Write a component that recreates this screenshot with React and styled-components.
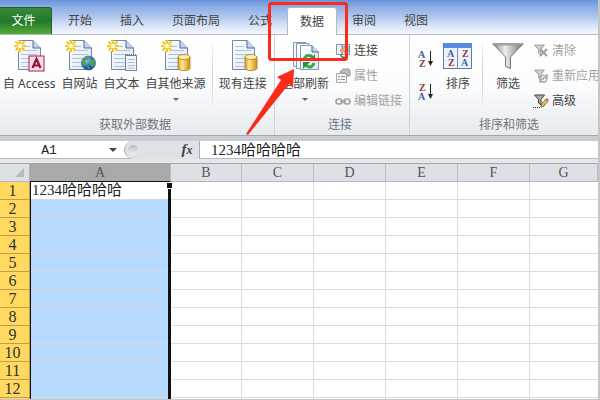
import React from "react";
import styled, { createGlobalStyle, css } from "styled-components";

const Global = createGlobalStyle`
  * { box-sizing: border-box; }
  body { margin: 0; font: 12px/16px "Noto Sans", "Noto Sans CJK SC", sans-serif; color: #444; }
  button, input { font: inherit; color: inherit; margin: 0; padding: 0; border: 0; background: none; }
`;

const Window = styled.div`
  position: relative;
  display: flex;
  flex-direction: column;
  height: 100vh;
  overflow: hidden;
  background: #fff;
  border-right: 2px solid #c6c6c6;
  border-bottom: 1px solid #c6c6c6;
`;

const TabBar = styled.nav`
  display: flex;
  align-items: flex-end;
  flex: none;
  height: 35px;
  border-bottom: 1px solid #b2bac8;
  background: linear-gradient(#6a93dc, #8bade6 7px, #b1c7ee 17px, #dbe5f7 26px, #f3f6fc 34px);
`;

const Tab = styled.button`
  height: 27px;
  margin: 0 1px;
  padding: 0 13px;
  white-space: nowrap;
  ${(p) => p.$active && css`
    height: 28px;
    margin-bottom: -1px;
    background: #fff;
    border: 1px solid #b2bac8;
    border-bottom: 0;
    border-radius: 3px 3px 0 0;
    padding: 0 12px;
  `}
`;

const FileTab = styled.button`
  width: 52px;
  height: 27px;
  margin-right: 2px;
  padding-right: 4px;
  color: #fff;
  border-top: 1px solid #17632a;
  border-right: 1px solid #17632a;
  border-radius: 0 3px 0 0;
  background: linear-gradient(#3a8a38, #22782a 50%, #55aa36);
`;

const Ribbon = styled.div`
  display: flex;
  flex: none;
  height: 101px;
  overflow: hidden;
  border-bottom: 1px solid #a2a6ac;
  background: linear-gradient(#fff, #fbfcfd 50%, #e7eaee);
`;

const Group = styled.section`
  display: flex;
  flex-direction: column;
  flex: ${(p) => (p.$width ? "none" : "1 0 0")};
  width: ${(p) => (p.$width ? p.$width + "px" : "auto")};
  min-width: 0;
  border-right: ${(p) => (p.$width ? "1px solid #cfd2d7" : "0")};
`;

const GroupBody = styled.div`
  display: flex;
  flex: 1;
  gap: ${(p) => p.$gap}px;
  padding: 4px 0 0 ${(p) => p.$left}px;
`;

const GroupLabel = styled.div`
  padding: 0 4px 2px 0;
  text-align: center;
  color: #6e7480;
  ${Group}:last-child > & { padding-left: 14px; }
`;

const LargeButton = styled.button`
  display: flex;
  flex: none;
  flex-direction: column;
  align-items: center;
  align-self: flex-start;
  min-width: ${(p) => p.$min || 0}px;
  white-space: nowrap;
  & > svg { flex: none; }
  & > span { margin-top: 3px; }
`;

const Caret = styled.i`
  margin-top: 6px;
  border: 3px solid transparent;
  border-top-color: #666;
  border-bottom: 0;
`;

const Divider = styled.div`
  flex: none;
  width: 1px;
  height: 62px;
  margin-top: 4px;
  background: linear-gradient(#f2f3f5, #cdd1d6 50%, #e8eaed);
`;

const SmallStack = styled.div`
  display: flex;
  flex: none;
  flex-direction: column;
  gap: 9px;
  padding-top: 4px;
`;

const SmallButton = styled.button`
  display: flex;
  align-items: center;
  gap: 3px;
  height: 16px;
  white-space: nowrap;
  color: ${(p) => (p.disabled ? "#a2a2a2" : "#444")};
`;

const SortStack = styled(SmallStack)`
  gap: 11px;
  padding-top: 9px;
`;

const SortButton = styled.button`
  display: block;
  width: 16px;
  height: 22px;
  & > svg { display: block; }
`;

const FormulaBar = styled.div`
  display: flex;
  flex: none;
  height: 27px;
  border-top: 5px solid #c9cdd3;
  border-bottom: 4px solid #e4e7ec;
  box-shadow: inset 0 -1px #b8bcc2;
  background: #fff;
  color: #222;
`;

const NameBox = styled.input`
  width: 98px;
  text-align: center;
  font: 13px/17px "Liberation Mono", monospace;
`;

const NameMenu = styled.button`
  display: flex;
  justify-content: center;
  align-items: center;
  width: 26px;
  padding-left: 4px;
  & > i { margin: 0; border-width: 4px 4px 0; border-top-color: #444; }
`;

const FormulaTools = styled.div`
  display: flex;
  align-items: center;
  justify-content: space-between;
  width: 76px;
  padding-right: 2px;
  border-left: 1px solid #a9adb3;
  border-right: 1px solid #a9adb3;
  border-radius: 9px 0 0 9px;
  background: #dfe2e7;
`;

const Knob = styled.span`
  width: 10px;
  height: 10px;
  margin-left: 3px;
  border-radius: 50%;
  background: linear-gradient(#b5b9be, #f4f5f6);
`;

const FxButton = styled.button`
  width: 20px;
  color: #444;
  font: italic bold 15px/17px "Liberation Serif", serif;
  & > small { font-size: 12px; }
`;

const FormulaInput = styled.input`
  flex: 1;
  min-width: 0;
  padding-left: 11px;
  font: 15px/17px "Liberation Serif", "Noto Sans CJK SC", serif;
`;

const SheetArea = styled.main`
  flex: 1;
  min-height: 0;
  overflow: hidden;
  border-top: 1px solid #a5a9af;
`;

const Sheet = styled.table`
  width: 100%;
  table-layout: fixed;
  border-collapse: separate;
  border-spacing: 0;
  color: #333;
  font: 15px/17px "Liberation Serif", "Noto Sans CJK SC", serif;
`;

const Col = styled.col`
  width: ${(p) => (p.$width ? p.$width + "px" : "auto")};
`;

const ColumnHead = styled.th`
  height: 18px;
  padding: 0;
  border-right: 1px solid #b9bdc3;
  border-bottom: 1px solid ${(p) => (p.$selected ? "#111" : "#b5b8bd")};
  background: ${(p) => (p.$selected ? "#a9a9a9" : "#dde1e6")};
  font: 14px/17px "Liberation Serif", serif;
  color: #555;
`;

const Corner = styled.td`
  padding: 0 5px 0 0;
  border-right: 1px solid #b0b4ba;
  border-bottom: 1px solid #b5b8bd;
  background: #dde1e6;
  & > svg { display: block; margin-left: auto; }
`;

const RowHead = styled.th`
  height: 18px;
  padding: 0 4px 0 0;
  overflow: hidden;
  border-right: 1px solid #c89b48;
  border-bottom: 1px solid #c89b48;
  background: #ffd960;
  font: 16px/17px "Liberation Serif", serif;
`;

const Cell = styled.td`
  height: 18px;
  padding: 0;
  border-right: 1px solid #dcdcdc;
  border-bottom: 1px solid #dcdcdc;
  &:last-child { border-right: 0; }
`;

const SelectedCell = styled.td`
  position: relative;
  height: 18px;
  padding: 0 3px 1px 2px;
  white-space: nowrap;
  color: #222;
  background:
    linear-gradient(#111, #111) left / 1px 100% no-repeat,
    linear-gradient(#111, #111) right / 3px 100% no-repeat,
    linear-gradient(#d5d9df, #d5d9df) bottom / 100% 1px no-repeat,
    ${(p) => (p.$active ? "#fff" : "#b5d9ff")};
`;

const FillHandle = styled.span`
  position: absolute;
  top: 0;
  right: -1px;
  width: 6px;
  height: 7px;
  background: #111;
  border: solid #fff;
  border-width: 1px 0 1px 1px;
`;

const Annotation = styled.svg`
  position: absolute;
  top: 0;
  left: 0;
  pointer-events: none;
`;

const Defs = () => (
  <defs>
    <linearGradient id="page" x2="1" y2="1"><stop stopColor="#fff" /><stop offset="1" stopColor="#d9e6f6" /></linearGradient>
    <linearGradient id="gold"><stop stopColor="#d99a1c" /><stop offset=".35" stopColor="#ffeb9a" /><stop offset="1" stopColor="#cf8c0c" /></linearGradient>
    <radialGradient id="sea" cx=".35" cy=".3"><stop stopColor="#9fd0ff" /><stop offset="1" stopColor="#1d55ad" /></radialGradient>
    <linearGradient id="steel"><stop stopColor="#8c8c8c" /><stop offset=".4" stopColor="#eee" /><stop offset="1" stopColor="#777" /></linearGradient>
  </defs>
);

const Page = () => (
  <g>
    <path d="M6.500 1.500H21L28.500 9V30.500H6.500Z" fill="url(#page)" stroke="#7487a3" />
    <path d="M21 1.500V9H28.500" fill="#c4d4ea" stroke="#4f6b96" />
    <path d="M9 7.500H18M9 11.500H25M9 15.500H25M9 19.500H25M9 23.500H25M9 27.500H20" stroke="#b3c1d6" />
  </g>
);

const Star = () => (
  <g>
    <circle cx="8" cy="7" r="5.500" fill="#fff5b5" />
    <path d="M8 1V13M2 7H14M3.500 2.500L12.500 11.500M12.500 2.500L3.500 11.500" stroke="#efbb16" strokeWidth="1.700" />
    <circle cx="8" cy="7" r="2.300" fill="#fffbe0" />
  </g>
);

const Cylinder = () => (
  <g stroke="#b17a15" strokeWidth=".8">
    <path d="M19 18V29C19 32.500 31 32.500 31 29V18Z" fill="url(#gold)" />
    <ellipse cx="25" cy="18" rx="6" ry="2.500" fill="#ffeeb0" />
  </g>
);

const Badge = {
  access: () => (
    <g>
      <rect x="17" y="17" width="15" height="15" fill="#fbdbe6" stroke="#b01e55" />
      <path d="M20.500 29L24.500 20L28.500 29M22 26.500H27" fill="none" stroke="#96103f" strokeWidth="2.200" />
    </g>
  ),
  globe: () => (
    <g>
      <circle cx="25.500" cy="24" r="7" fill="url(#sea)" stroke="#285a9b" strokeWidth=".6" />
      <path d="M20 20Q23 17 26 18L25 21L22 22L23 25L21 28Q18 24 20 20ZM27 21L31 20Q33 25 30 28L27 26ZM24 27L27 28L25 30.500Z" fill="#53a548" />
    </g>
  ),
  text: () => (
    <g>
      <rect x="20.500" y="16.500" width="11" height="15" fill="#f4f7fb" stroke="#76859c" />
      <path d="M20 16H32" stroke="#777" strokeWidth="2" strokeDasharray="1 1" />
      <path d="M22.500 20.500H30M22.500 23.500H30M22.500 26.500H30M22.500 29H30" stroke="#aab6c8" />
    </g>
  ),
  data: Cylinder,
};

const SourceIcon = ({ kind, fresh }) => {
  const Mark = Badge[kind];
  return (
    <svg width="34" height="34" aria-hidden="true">
      <Defs />
      <Page />
      {fresh && <Star />}
      <Mark />
    </svg>
  );
};

const RefreshIcon = () => (
  <svg width="34" height="34" aria-hidden="true">
    <g fill="#f5f8fc" stroke="#8799b4">
      <path d="M5.500 3.500H18V27.500H5.500Z" /><path d="M8.500 4.500H21V29.500H8.500Z" />
      <path d="M12.500 6.500H24L30.500 13V30.500H12.500Z" fill="url(#page)" />
      <path d="M24 6.500V13H30.500" fill="#c4d4ea" stroke="#4f6b96" />
    </g>
    <path d="M16 21Q17 15 23 17L25 19M26 24Q24 30 19 27L17 25" fill="none" stroke="#35a744" strokeWidth="3" />
    <path d="M27 15V22H20ZM15 30V23H22Z" fill="#249636" />
  </svg>
);

const Letters = ({ first, x = 0, y = 0 }) => (
  <g transform={`translate(${x} ${y})`} fontFamily="Liberation Serif, serif" fontSize="10" fontWeight="bold">
    <text x={first === "A" ? 0 : 1} y="8" fill={first === "A" ? "#3f5fa8" : "#96383d"}>{first}</text>
    <text x={first === "A" ? 1 : 0} y="17" fill={first === "A" ? "#96383d" : "#3f5fa8"}>{first === "A" ? "Z" : "A"}</text>
  </g>
);

const SortIcon = ({ first }) => (
  <svg width="16" height="22" aria-hidden="true">
    <Letters first={first} y={2} />
    <path d="M12.500 3V15" stroke="#222" />
    <path d="M10 13H15L12.500 18Z" fill="#222" />
  </svg>
);

const SortDialogIcon = () => (
  <svg width="30" height="34" aria-hidden="true">
    <rect x=".5" y="4.500" width="28" height="25" fill="#edf3fc" stroke="#6479a2" />
    <rect x="1" y="4" width="28" height="5" fill="#5389e3" />
    <path d="M14.500 9V29" stroke="#7c8da9" />
    <Letters first="A" x={4} y={10} />
    <Letters first="Z" x={18} y={10} />
  </svg>
);

const FilterIcon = () => (
  <svg width="32" height="34" aria-hidden="true">
    <Defs />
    <path d="M1.500 5.500L13.500 18V27.500L18.500 29.500V18L30.500 5.500Z" fill="url(#steel)" stroke="#777" />
    <path d="M1 4.500H31V6H1Z" fill="#b9b9b9" stroke="#777" strokeWidth=".6" />
  </svg>
);

const smallShapes = {
  link: (
    <>
      <path d="M1.500 1.500H7V11.500H1.500ZM7.500 1.500H14.500V11.500H7.500Z" fill="#eaf1fa" stroke="#8495ae" />
      <path d="M9 3.500H13V9H9Z" fill="#fff" stroke="#6d7f98" />
      <path d="M5 6H9L8 9H5Z" fill="#edae3c" />
      <path d="M6 11Q6 14.500 9 14.500T12 11" fill="none" stroke="#48658e" strokeWidth="1.500" />
    </>
  ),
  props: (
    <>
      <path d="M1.500 5.500H11.500V14.500H1.500Z" fill="#f3f3f3" stroke="#a9a9a9" />
      <path d="M3 8.500H5M6 8.500H10M3 11.500H5M6 11.500H10" stroke="#999" />
      <path d="M5 4L8 1H14L15 3V8H12L10 5H6Z" fill="#bbb" stroke="#999" />
    </>
  ),
  chain: (
    <g fill="none" stroke="#a2a2a2" strokeWidth="1.600">
      <rect x="1" y="6" width="6" height="5" rx="2.500" /><rect x="9" y="6" width="6" height="5" rx="2.500" /><path d="M5 8.500H11" />
    </g>
  ),
};

const Funnel = ({ dark }) => (
  <path d="M1.500 2H11.500L8 6.500V12L5.500 10V6.500Z" fill={dark ? "#aaa" : "#ccc"} stroke={dark ? "#444" : "#a2a2a2"} />
);

const funnelShapes = {
  clear: <path d="M7 6L14 13M14 6L7 13" stroke="#a2a2a2" strokeWidth="2.200" />,
  reapply: <path d="M7 10Q9 5 14 9M14 6V10H10M14 11Q12 16 8 13M7 15V11H11" fill="none" stroke="#aaa" strokeWidth="1.600" />,
  advanced: (
    <>
      <path d="M8 14L9 10.500L13 6L15 8L11 13Z" fill="#efc64c" stroke="#6a522a" strokeWidth=".8" />
      <path d="M12.500 6.500L14 5L16 7L14.500 8.500Z" fill="#c86767" />
      <path d="M0 14.500H7" stroke="#222" strokeDasharray="1 1" />
    </>
  ),
};

const SmallIcon = ({ kind }) => (
  <svg width="16" height="16" aria-hidden="true">
    {smallShapes[kind] || <><Funnel dark={kind === "advanced"} />{funnelShapes[kind]}</>}
  </svg>
);

const sources = [
  ["access", "自 Access"],
  ["globe", "自网站"],
  ["text", "自文本"],
  ["data", "自其他来源", true],
];
const links = [["link", "连接"], ["props", "属性", true], ["chain", "编辑链接", true]];
const filters = [["clear", "清除", true], ["reapply", "重新应用", true], ["advanced", "高级"]];
const tabs = ["开始", "插入", "页面布局", "公式", "数据", "审阅", "视图"];
const columns = ["B", "C", "D", "E", "F", "G"];
const rows = ["1", "2", "3", "4", "5", "6", "7", "8", "9", "10", "11", "12", ""];
const widths = [30, 141, 71, 72, 72, 72, 72, 0];

const SmallList = ({ items }) => (
  <SmallStack>
    {items.map(([kind, label, off]) => (
      <SmallButton key={kind} disabled={off}><SmallIcon kind={kind} /><span>{label}</span></SmallButton>
    ))}
  </SmallStack>
);

export default function App() {
  return (
    <Window>
      <Global />
      <TabBar>
        <FileTab>文件</FileTab>
        {tabs.map((t) => <Tab key={t} $active={t === "数据"}>{t}</Tab>)}
      </TabBar>

      <Ribbon>
        <Group $width={275}>
          <GroupBody $gap={6} $left={3}>
            {sources.map(([kind, label, menu]) => (
              <LargeButton key={kind}>
                <SourceIcon kind={kind} fresh /><span>{label}</span>{menu && <Caret />}
              </LargeButton>
            ))}
            <Divider />
            <LargeButton><SourceIcon kind="data" /><span>现有连接</span></LargeButton>
          </GroupBody>
          <GroupLabel>获取外部数据</GroupLabel>
        </Group>
        <Group $width={135}>
          <GroupBody $gap={6} $left={6}>
            <LargeButton><RefreshIcon /><span>全部刷新</span><Caret /></LargeButton>
            <SmallList items={links} />
          </GroupBody>
          <GroupLabel>连接</GroupLabel>
        </Group>
        <Group>
          <GroupBody $gap={9} $left={8}>
            <SortStack>
              <SortButton aria-label="升序"><SortIcon first="A" /></SortButton>
              <SortButton aria-label="降序"><SortIcon first="Z" /></SortButton>
            </SortStack>
            <LargeButton $min={30}><SortDialogIcon /><span>排序</span></LargeButton>
            <Divider />
            <LargeButton $min={32}><FilterIcon /><span>筛选</span></LargeButton>
            <SmallList items={filters} />
          </GroupBody>
          <GroupLabel>排序和筛选</GroupLabel>
        </Group>
      </Ribbon>

      <FormulaBar>
        <NameBox aria-label="名称框" defaultValue="A1" />
        <NameMenu aria-label="名称列表"><Caret /></NameMenu>
        <FormulaTools>
          <Knob />
          <FxButton aria-label="插入函数">f<small>x</small></FxButton>
        </FormulaTools>
        <FormulaInput aria-label="编辑栏" defaultValue="1234哈哈哈哈" />
      </FormulaBar>

      <SheetArea>
        <Sheet>
          <colgroup>{widths.map((w, i) => <Col key={i} $width={w} />)}</colgroup>
          <thead>
            <tr>
              <Corner><svg width="9" height="9" aria-hidden="true"><path d="M9 0V9H0Z" fill="#b7bbc1" /></svg></Corner>
              <ColumnHead scope="col" $selected>A</ColumnHead>
              {columns.map((c) => <ColumnHead key={c} scope="col">{c}</ColumnHead>)}
            </tr>
          </thead>
          <tbody>
            {rows.map((n, i) => (
              <tr key={i}>
                <RowHead scope="row">{n}</RowHead>
                <SelectedCell $active={i === 0}>
                  {i === 0 && <>1234哈哈哈哈<FillHandle /></>}
                </SelectedCell>
                {columns.map((c) => <Cell key={c} />)}
              </tr>
            ))}
          </tbody>
        </Sheet>
      </SheetArea>

      <Annotation width="360" height="140" aria-hidden="true">
        <rect x="269.500" y="3.500" width="77" height="56" rx="2" fill="none" stroke="#fb2b1c" strokeWidth="3" />
        <path d="M294 69L277 77L281 80L246 134L248 135L289 84L293 88Z" fill="#fb2b1c" />
      </Annotation>
    </Window>
  );
}
